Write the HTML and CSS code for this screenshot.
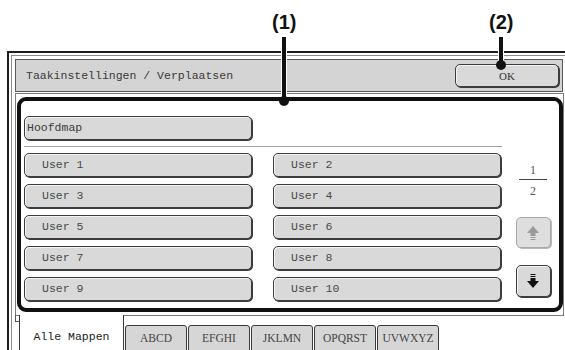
FILE: index.html
```html
<!DOCTYPE html>
<html lang="nl">
<head>
<meta charset="utf-8">
<title>Taakinstellingen / Verplaatsen</title>
<link rel="stylesheet" href="styles.css">
</head>
<body>
<div class="screen">
  <div class="screen-inner">
    <div class="titlebar">
      <span class="title">Taakinstellingen / Verplaatsen</span>
      <button class="btn ok">OK</button>
    </div>
    <div class="panel">
      <div class="highlight">
        <div class="main">
          <button class="btn root">Hoofdmap</button>
          <div class="sep"></div>
          <div class="grid">
            <button class="btn user">User 1</button>
            <button class="btn user">User 2</button>
            <button class="btn user">User 3</button>
            <button class="btn user">User 4</button>
            <button class="btn user">User 5</button>
            <button class="btn user">User 6</button>
            <button class="btn user">User 7</button>
            <button class="btn user">User 8</button>
            <button class="btn user">User 9</button>
            <button class="btn user">User 10</button>
          </div>
        </div>
        <div class="aside">
          <div class="pager">
            <div class="num">1</div>
            <div class="bar"></div>
            <div class="num second">2</div>
          </div>
          <button class="arrow disabled" aria-label="omhoog">
            <svg width="12" height="14" viewBox="0 0 12 14"><polygon points="0,7 6,0 12,7" fill="#9a9a9a"/><rect x="3.5" y="7" width="5" height="3" fill="#9a9a9a"/><rect x="3.5" y="11" width="5" height="1" fill="#9a9a9a"/><rect x="3.5" y="13" width="5" height="1" fill="#9a9a9a"/></svg>
          </button>
          <button class="arrow down" aria-label="omlaag">
            <svg width="12" height="14" viewBox="0 0 12 14"><rect x="3.5" y="0" width="5" height="1" fill="#111"/><rect x="3.5" y="2" width="5" height="1" fill="#111"/><rect x="3.5" y="4" width="5" height="3" fill="#111"/><polygon points="0,7 12,7 6,14" fill="#111"/></svg>
          </button>
        </div>
      </div>
    </div>
    <div class="tabs">
      <div class="tab-foot"></div>
      <div class="tab active">Alle Mappen</div>
      <div class="tab">ABCD</div>
      <div class="tab">EFGHI</div>
      <div class="tab">JKLMN</div>
      <div class="tab">OPQRST</div>
      <div class="tab">UVWXYZ</div>
    </div>
  </div>
</div>

<div class="callout c1"><span class="label">(1)</span><span class="stem"></span><span class="dot"></span></div>
<div class="callout c2"><span class="label">(2)</span><span class="stem"></span><span class="dot"></span></div>
</body>
</html>
```

FILE: styles.css
```css
* { box-sizing: border-box; }

html, body {
  margin: 0;
  padding: 0;
  width: 565px;
  height: 350px;
  overflow: hidden;
  background: #fff;
}

body {
  position: relative;
  font-family: "Liberation Mono", "DejaVu Sans Mono", monospace;
  font-size: 11.5px;
  color: #333;
}

button {
  font-family: inherit;
  font-size: inherit;
  margin: 0;
  padding: 0;
  cursor: default;
}

.screen {
  margin: 51px 0 0 7px;
  width: 558px;
  height: 299px;
  border: 2px solid #1e1e1e;
  border-right: none;
  border-bottom: none;
  overflow: hidden;
}

.screen-inner {
  margin: 2px 0 0 2px;
  height: 297px;
  border: 1px solid #8c8c8c;
  border-right: none;
  border-bottom: none;
  padding: 3px 0 0 3px;
}

.titlebar {
  width: 548px;
  height: 33px;
  background: #d4d4d4;
  border: 1px solid #5a5a5a;
  display: flex;
  align-items: center;
  justify-content: space-between;
  padding: 0 3px 0 10px;
}

.title { color: #3a3a3a; }

.btn {
  background: #d9d9d9;
  border: 1px solid #3c3c3c;
  border-radius: 5px;
  box-shadow: inset 1px 1px 0 #f4f4f4, 1px 1px 0 #3c3c3c;
  color: #444;
  text-align: left;
  line-height: 14px;
}

.ok {
  width: 104px;
  height: 23px;
  text-align: center;
  color: #333;
  font-family: "Liberation Serif", serif;
  font-size: 11px;
}

.panel {
  margin-top: 1px;
  width: 549px;
  border: 1px solid #7a7a7a;
  padding: 3px 0 3px 1px;
}

.highlight {
  width: 546px;
  height: 215px;
  border: 4px solid #111;
  border-radius: 9px;
  padding: 15px 0 0 3px;
  display: flex;
}

.main { width: 482px; }

.root {
  width: 228px;
  height: 24px;
  padding-left: 2px;
  color: #3a3a3a;
}

.sep {
  margin-top: 6px;
  width: 478px;
  height: 1px;
  background: #a0a0a0;
}

.grid {
  margin-top: 6px;
  display: grid;
  grid-template-columns: 228px 228px;
  grid-auto-rows: 24px;
  column-gap: 21px;
  row-gap: 7px;
}

.user { padding-left: 17px; color: #4a4a4a; }

.aside {
  margin-left: 9px;
  width: 36px;
  display: flex;
  flex-direction: column;
  align-items: center;
}

.pager {
  margin-top: 47px;
  display: flex;
  flex-direction: column;
  align-items: center;
  color: #555;
  font-family: "Liberation Serif", serif;
  font-size: 12px;
}

.num { line-height: 14px; }
.num.second { margin-top: 4px; }

.bar {
  margin-top: 2px;
  width: 28px;
  height: 1px;
  background: #444;
}

.arrow {
  width: 35px;
  height: 31px;
  border-radius: 5px;
  display: flex;
  align-items: center;
  justify-content: center;
}

.arrow.disabled {
  margin-top: 19px;
  background: #dedede;
  border: 1px solid #a8a8a8;
  box-shadow: 1px 1px 0 #b8b8b8;
}

.arrow.down {
  margin-top: 17px;
  height: 32px;
  background: #d9d9d9;
  border: 1px solid #3c3c3c;
  box-shadow: inset 1px 1px 0 #f4f4f4, 1px 1px 0 #3c3c3c;
}

.tabs {
  display: flex;
  align-items: flex-start;
}

.tab-foot {
  width: 4px;
  height: 7px;
  border-left: 1px solid #555;
  border-bottom: 1px solid #555;
  margin-top: -1px;
}

.tab {
  margin-top: 9px;
  margin-left: 1px;
  width: 62px;
  height: 30px;
  background: #d6d6d6;
  border: 1px solid #3a3a3a;
  border-radius: 3px 3px 0 0;
  text-align: center;
  line-height: 14px;
  padding-top: 5px;
  color: #444;
  font-family: "Liberation Serif", serif;
  font-size: 11.5px;
}

.tab.active {
  margin-top: -1px;
  margin-left: 0;
  width: 105px;
  height: 40px;
  background: #fff;
  border-top: none;
  border-radius: 0;
  padding-top: 15px;
  color: #222;
  font-family: "Liberation Mono", monospace;
}

.callout {
  position: absolute;
  top: 10px;
  display: flex;
  flex-direction: column;
  align-items: center;
}

.callout .label {
  font-family: "Liberation Sans", Arial, sans-serif;
  font-weight: bold;
  font-size: 20px;
  line-height: 24px;
  color: #111;
}

.callout .stem {
  width: 4px;
  background: #111;
  box-shadow: 0 0 0 1px #fff;
  margin-top: 3px;
}

.callout .dot {
  width: 10px;
  height: 10px;
  border-radius: 50%;
  background: #111;
  margin-top: -5px;
}

.c1 { left: 272px; }
.c1 .stem { height: 64px; }

.c2 { left: 489px; }
.c2 .stem { height: 28px; }
```
